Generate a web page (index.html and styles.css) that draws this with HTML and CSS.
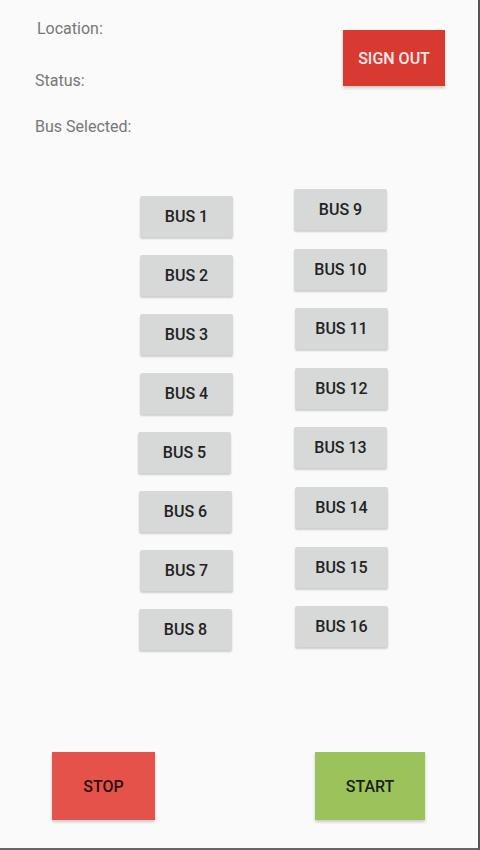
FILE: index.html
```html
<!DOCTYPE html>
<html lang="en">
<head>
    <meta charset="UTF-8">
    <meta name="viewport" content="width=device-width, initial-scale=1.0">
    <title>Bus Tracker</title>
    <link rel="stylesheet" href="styles.css">
</head>
<body>
    <div class="screen">
        <div class="header">
            <div class="info">
                <div class="label location">Location:</div>
                <div class="label status">Status:</div>
                <div class="label selected">Bus Selected:</div>
            </div>
            <button class="signout">SIGN OUT</button>
        </div>

        <div class="buses">
            <div class="col left">
                <button class="bus">BUS 1</button>
                <button class="bus">BUS 2</button>
                <button class="bus">BUS 3</button>
                <button class="bus">BUS 4</button>
                <button class="bus shift-l">BUS 5</button>
                <button class="bus shift-m">BUS 6</button>
                <button class="bus">BUS 7</button>
                <button class="bus shift-m">BUS 8</button>
            </div>
            <div class="col right">
                <button class="bus">BUS 9</button>
                <button class="bus">BUS 10</button>
                <button class="bus shift-r">BUS 11</button>
                <button class="bus shift-r">BUS 12</button>
                <button class="bus">BUS 13</button>
                <button class="bus shift-r">BUS 14</button>
                <button class="bus shift-r">BUS 15</button>
                <button class="bus shift-r">BUS 16</button>
            </div>
        </div>

        <div class="footer">
            <button class="action stop">STOP</button>
            <button class="action start">START</button>
        </div>
    </div>
</body>
</html>
```

FILE: styles.css
```css
body { margin: 0; background: #fafafa; font-family: Roboto, "Liberation Sans", sans-serif; }
.screen { height: 850px; box-sizing: border-box; display: flex; flex-direction: column; border-right: 2px solid #555; border-bottom: 2px solid #666; }
button { font-family: Roboto, "Liberation Sans", sans-serif; font-weight: 500; border: none; padding: 0; cursor: pointer; }

.header { display: flex; justify-content: space-between; align-items: flex-start; padding: 19px 33px 0 35px; }
.label { font-size: 16px; line-height: 20px; color: #777; }
.location { margin-left: 2px; }
.status { margin-top: 32px; }
.selected { margin-top: 26px; }
.signout { margin-top: 11px; width: 102px; height: 56px; background: #d93a30; color: #fdecea; font-size: 16px; box-shadow: 0 2px 3px rgba(0,0,0,0.2); }

.buses { display: flex; padding-left: 140px; gap: 61px; margin-top: 52px; }
.col { display: flex; flex-direction: column; }
.col.left { gap: 18px; padding-top: 7px; }
.col.right { gap: 18.6px; }
.bus { width: 93px; height: 41px; background: #d7d8d8; color: #222; font-size: 16px; border-radius: 2px; box-shadow: 0 2px 2px rgba(0,0,0,0.18); }
.shift-l { margin-left: -2px; }
.shift-m { margin-left: -1px; }
.shift-r { margin-left: 1px; }

.footer { margin-top: auto; display: flex; justify-content: space-between; padding: 0 53px 28px 52px; }
.action { height: 68px; font-size: 16px; color: rgba(0,0,0,0.85); box-shadow: 0 2px 3px rgba(0,0,0,0.2); }
.stop { width: 103px; background: #e5524a; }
.start { width: 110px; background: #9bc25b; }
```
